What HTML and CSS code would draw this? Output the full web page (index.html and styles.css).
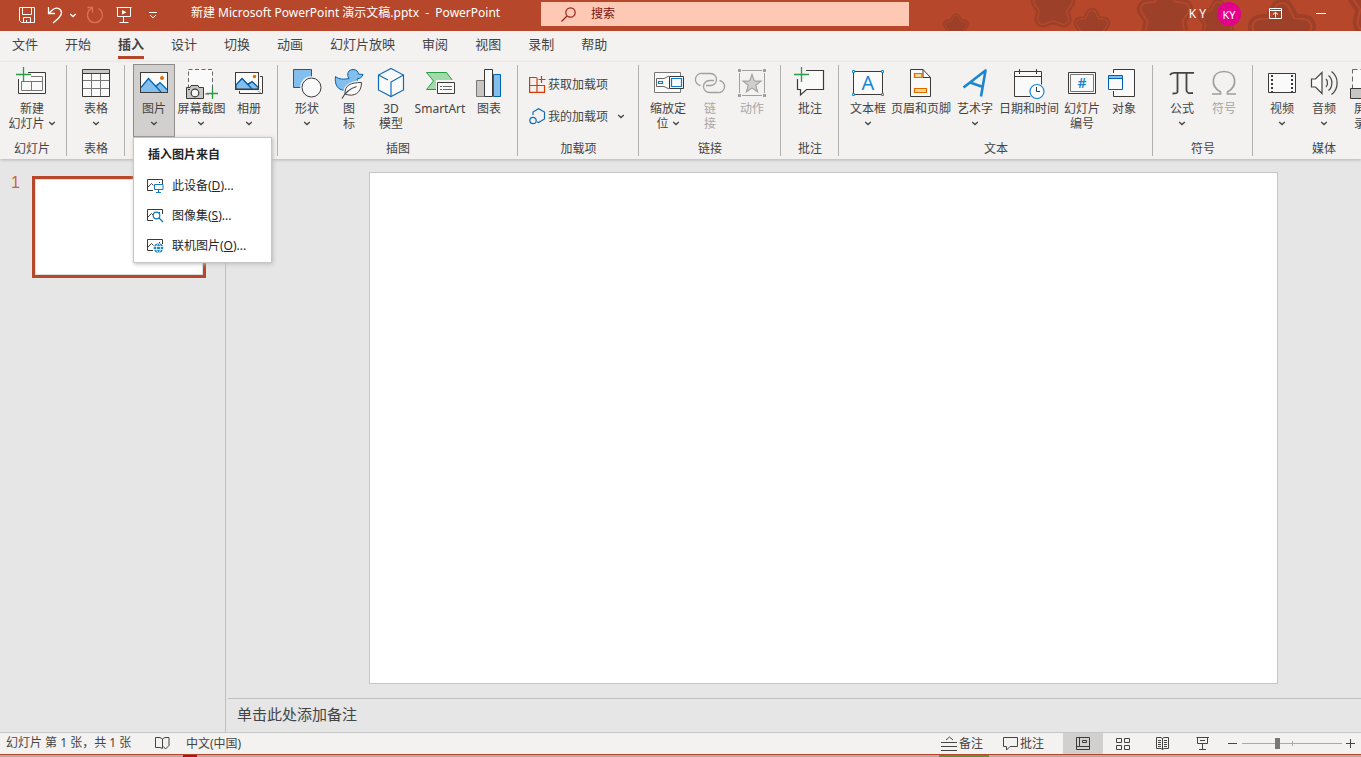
FILE: index.html
```html
<!DOCTYPE html>
<html lang="zh-CN">
<head>
<meta charset="utf-8">
<title>新建 Microsoft PowerPoint 演示文稿.pptx - PowerPoint</title>
<link rel="stylesheet" href="styles.css">
</head>
<body>
<svg class="defs" aria-hidden="true">
  <defs>
    <symbol id="chev" viewBox="0 0 8 5"><path d="M1.2 1 L4 3.6 L6.8 1" fill="none" stroke="currentColor" stroke-width="1.3"/></symbol>
    <path id="star" d="M0 -16 L5 -6 L15 -5 L9 4 L11 14 L0 10 L-11 14 L-9 4 L-15 -5 L-5 -6 Z" stroke-linejoin="round"/>
    <g id="starfull">
      <use href="#star" fill="#9c4029" stroke="#9c4029" stroke-width="17"/>
      <use href="#star" fill="#9c4029" stroke="#b7472a" stroke-width="12"/>
      <use href="#star" fill="#9c4029" stroke="#9c4029" stroke-width="9"/>
    </g>
    <g id="pic">
      <rect x="2.5" y="5.5" width="27" height="20" fill="#fafafa"/>
      <path d="M3 20 L10.500 11.500 L17 18 L22 15.500 L29 22.500 V25 H3 Z" fill="#83beec"/>
      <path d="M3 20.500 L10.500 11.500 L23 25 M18 19.500 L22 15.500 L29 22.500" fill="none" stroke="#0063b1" stroke-width="1.200"/>
      <circle cx="24" cy="11" r="2" fill="#e06c00"/>
      <rect x="2.5" y="5.5" width="27" height="20" fill="none" stroke="#3b3a38"/>
    </g>
    <g id="minipic">
      <path d="M15.500 7 V2.500 H.5 V13.500 H6" fill="none" stroke="#3b3a38"/>
      <path d="M1 10 L4.500 6.500 L6.500 8.500" fill="none" stroke="#3b3a38"/>
      <rect x="12" y="5" width="1" height="1" fill="#3b3a38"/>
    </g>
  </defs>
</svg>

<div class="app">
<header class="titlebar">
  <svg class="stars" width="441" height="31" viewBox="0 0 441 31" aria-hidden="true">
    <use href="#starfull" transform="translate(36 27) scale(.55)"/>
    <use href="#starfull" transform="translate(133 6) scale(.95)"/>
    <use href="#starfull" transform="translate(172 27) scale(.78)"/>
    <use href="#starfull" transform="translate(245 15) scale(1.2)"/>
    <use href="#starfull" transform="translate(298 20) scale(.85)"/>
    <use href="#starfull" transform="translate(362 34) scale(1.45)"/>
    <use href="#starfull" transform="translate(462 2) scale(1.5)"/>
  </svg>
  <div class="quick">
    <button class="q-save" aria-label="保存"><svg width="16" height="16" viewBox="0 0 16 16" fill="none" stroke="#fff"><path d="M.5 .5 H15.500 V15.500 H2.500 L.5 13.500 Z M3.500 .5 V7.500 H12.500 V.5 M4.500 15.500 V10.500 H11.500 V15.500 M7.500 13 V15"/></svg></button>
    <button class="q-undo" aria-label="撤消"><svg width="16" height="18" viewBox="0 0 16 18" fill="none" stroke="#fff" stroke-width="1.300"><path d="M1.500 1 V7.500 H8 M1.500 7.500 L6 3.500 C9 1 14 2 14.500 6.500 C14.700 10 11 13 6 17"/></svg></button>
    <button class="q-chev" aria-label="撤消选项"><svg width="8" height="5"><use href="#chev"/></svg></button>
    <button class="q-redo" aria-label="重复"><svg width="18" height="18" viewBox="0 0 18 18" fill="none" stroke="#e0704f" stroke-width="1.300"><path d="M1.500 1.500 H6.500 V6.500 M6 2.200 A7.500 7.500 0 1 0 12.500 2.500"/></svg></button>
    <button class="q-show" aria-label="从头开始"><svg width="16" height="16" viewBox="0 0 16 16" fill="none" stroke="#fff"><path d="M.5 .5 H15.500 M1.500 .5 V9.500 H14.500 V.5 M7.500 9.500 V15 M3.500 15.500 H12.500"/><path d="M6 3 L10.500 5.300 L6 7.500 Z" fill="#fff" stroke="none"/></svg></button>
    <button class="q-more" aria-label="自定义快速访问工具栏"><svg width="8" height="7" viewBox="0 0 8 7" fill="none" stroke="#fff"><path d="M0 .5 H8 M1 3 L4 5.800 L7 3"/></svg></button>
  </div>
  <div class="doc-title">新建 Microsoft PowerPoint 演示文稿.pptx&nbsp; -&nbsp; PowerPoint</div>
  <label class="search">
    <svg width="15" height="15" viewBox="0 0 15 15" fill="none" stroke="#96261c" stroke-width="1.200"><circle cx="9.500" cy="5.500" r="4.700"/><path d="M6 9 L.5 14.500"/></svg>
    <input type="text" placeholder="搜索" aria-label="搜索">
  </label>
  <div class="account">
    <span class="user">K Y</span>
    <button class="avatar" aria-label="帐户">KY</button>
    <button class="win" aria-label="功能区显示选项"><svg width="13" height="11" viewBox="0 0 13 11" fill="none" stroke="#fff"><path d="M.5 .5 H12.500 V10.500 H.5 Z M.5 2.500 H12.500 M6.500 9.500 V4.500 M4 6.500 L6.500 4.300 L9 6.500"/></svg></button>
    <button class="win" aria-label="最小化"><svg width="10" height="1"><rect width="10" height="1" fill="#fff"/></svg></button>
  </div>
</header>

<nav class="tabs">
  <button>文件</button><button>开始</button><button class="on">插入</button><button>设计</button><button>切换</button><button>动画</button><button>幻灯片放映</button><button>审阅</button><button>视图</button><button>录制</button><button>帮助</button>
</nav>

<div class="ribbon">
  <section class="group first">
    <div class="tools">
      <button class="tool w48"><svg class="ico" viewBox="0 0 32 32" fill="none" stroke="#444"><path d="M12 5.500 H29.500 V26.500 H2.500 V12" fill="#fafafa" stroke="#3b3a38"/><path d="M15 9.500 H26.500 V23.500 H5.500 V14.500 H26.500 M15.500 14.500 V23.500" stroke="#777"/><path d="M7.500 0 V15 M0 7.500 H15" stroke="#2b9a4b" stroke-width="1.300"/></svg>
      <span>新建<br>幻灯片 <svg class="chev"><use href="#chev"/></svg></span></button>
    </div>
    <h2>幻灯片</h2>
  </section>
  <section class="group">
    <div class="tools">
      <button class="tool"><svg class="ico" viewBox="0 0 32 32" fill="none" stroke="#3b3a38"><path d="M2.500 2.500 H29.500 V29.500 H2.500 Z" fill="#fafafa"/><path d="M3 3 H29 V6 H3 Z" fill="#c8c6c4" stroke="none"/><path d="M2.500 6.500 H29.500"/><path d="M3 13.500 H29 M3 21.500 H29 M11.500 7 V29 M20.500 7 V29" stroke="#777"/></svg>
      <span>表格<br><svg class="chev"><use href="#chev"/></svg></span></button>
    </div>
    <h2>表格</h2>
  </section>
  <section class="group">
    <div class="tools">
      <div class="drop">
        <button class="tool open" aria-expanded="true"><svg class="ico" viewBox="0 0 32 32"><use href="#pic"/></svg>
        <span>图片<br><svg class="chev"><use href="#chev"/></svg></span></button>
        <div class="menu">
          <h3>插入图片来自</h3>
          <button><svg width="17" height="16" viewBox="0 0 17 16"><use href="#minipic"/><path d="M7.500 7.500 H16 V12.500 H7.500 Z M11.500 12.500 V15 M9 15.500 H14" fill="#fff" stroke="#0f7ac5"/></svg><span>此设备(<u>D</u>)...</span></button>
          <button><svg width="17" height="16" viewBox="0 0 17 16"><use href="#minipic"/><circle cx="9.500" cy="8.500" r="3.300" fill="#fff" stroke="#0f7ac5" stroke-width="1.200"/><path d="M12 11 L16 15" stroke="#0f7ac5" stroke-width="1.300"/></svg><span>图像集(<u>S</u>)...</span></button>
          <button><svg width="17" height="16" viewBox="0 0 17 16"><use href="#minipic"/><circle cx="11.500" cy="11" r="4.800" fill="#1b86d0"/><path d="M7 9.500 H16 M7 12.500 H16" stroke="#fff" stroke-width=".8"/><ellipse cx="11.500" cy="11" rx="2" ry="4.500" fill="none" stroke="#fff" stroke-width=".8"/></svg><span>联机图片(<u>O</u>)...</span></button>
        </div>
      </div>
      <button class="tool w53"><svg class="ico" viewBox="0 0 32 32" fill="none" stroke="#3b3a38"><path d="M2.500 2.500 H26.500 V27 H2.500 Z" fill="#fafafa" stroke="#666" stroke-dasharray="4 2.500"/><path d="M.5 20.500 H4 L5 18.500 H12 L13 20.500 H17.500 V31.500 H.5 Z" fill="#c8c6c4"/><circle cx="9" cy="26" r="3.800" fill="#fafafa" stroke-width="1.200"/><path d="M2 22.500 H4"/><path d="M26.500 20 V32 M20.500 26.500 H32" stroke="#2b9a4b" stroke-width="1.300"/></svg>
      <span>屏幕截图<br><svg class="chev"><use href="#chev"/></svg></span></button>
      <button class="tool"><svg class="ico" viewBox="0 0 32 32" fill="none" stroke="#3b3a38"><path d="M6.500 9.500 H29.500 V26.500 H6.500 Z" fill="#fafafa"/><path d="M22 22 L28 26 M24 21 L28 23" stroke="#999"/><path d="M1 4 H27 V24 H1 Z" fill="#f3f2f1" stroke="none"/><path d="M2.500 5.500 H25.500 V22.500 H2.500 Z" fill="#fafafa"/><path d="M3 18 L9 11.500 L14.500 17 L19 14.500 L25 20 V22 H3 Z" fill="#83beec"/><path d="M3 18 L9 11.500 L19 22 M15 18 L19 14.500 L25 20" stroke="#0063b1" stroke-width="1.200"/><path d="M2.500 5.500 H25.500 V22.500 H2.500 Z"/><circle cx="21.500" cy="9.500" r="1.700" fill="#e06c00" stroke="none"/></svg>
      <span>相册<br><svg class="chev"><use href="#chev"/></svg></span></button>
    </div>
    <h2></h2>
  </section>
  <section class="group">
    <div class="tools">
      <button class="tool"><svg class="ico" viewBox="0 0 32 32" fill="none"><path d="M2.500 2.500 H20.500 V20.500 H2.500 Z" fill="#83beec" stroke="#0063b1"/><circle cx="20.500" cy="20.500" r="11.300" fill="#f3f2f1"/><circle cx="20.500" cy="20.500" r="9.500" fill="#fafafa" stroke="#3b3a38"/></svg>
      <span>形状<br><svg class="chev"><use href="#chev"/></svg></span></button>
      <button class="tool"><svg class="ico" viewBox="0 0 32 32" fill="none"><path d="M2.500 9.500 C6 12.500 11 12.500 16 11.500 C13 7 15.500 2.500 20 2.500 C23.500 2.500 25 4.500 25.500 7 L30 7.500 C29 10.500 27 11.500 24 12 C26 17 24 22 18 23.500 H12 C4 23 1.500 17 2.500 9.500 Z" fill="#83beec" stroke="#0063b1"/><path d="M30 13 C18 14 9 17 10 30 H17 C27 31 31 23 30 13 Z" fill="#f3f2f1"/><path d="M28.500 15.500 C18 15.500 11.500 18 12 27 C21 30.500 28.500 26 28.500 15.500 Z" fill="#fafafa" stroke="#444"/><path d="M9 31.500 C12 26 17 21.500 23.500 19.500" stroke="#444" stroke-width="1.200"/></svg>
      <span>图<br>标</span></button>
      <button class="tool"><svg class="ico" viewBox="0 0 32 32" fill="none" stroke="#0f6cbd" stroke-width="1.200"><path d="M16 1.500 L28.500 8 V23 L16 29.500 L3.500 23 V8 Z" fill="#fafafa"/><path d="M3.500 8 L13 13 M16 29.500 V15 L28.500 8"/></svg>
      <span>3D<br>模型</span></button>
      <button class="tool w56"><svg class="ico" viewBox="0 0 32 32" fill="none"><path d="M2.500 5.500 H22.500 L29 14 L23 22.500 H2.500 L9.500 14 Z" fill="#a0dba8" stroke="#2b9a4b"/><path d="M12 13 H32 V29 H12 Z" fill="#f3f2f1"/><path d="M13.500 15.500 H30.500 V26.500 H13.500 Z" fill="#fafafa" stroke="#3b3a38"/><path d="M16 19.500 H18 M19 19.500 H28 M16 22.500 H18 M19 22.500 H28" stroke="#666"/></svg>
      <span>SmartArt</span></button>
      <button class="tool"><svg class="ico" viewBox="0 0 32 32"><path d="M3.500 13.500 H11.500 V29.500 H3.500 Z" fill="#c8c6c4" stroke="#777"/><path d="M20.500 7.500 H27.500 V29.500 H20.500 Z" fill="#83beec" stroke="#0063b1"/><path d="M11.500 2.500 H19.500 V29.500 H11.500 Z" fill="#fafafa" stroke="#3b3a38"/></svg>
      <span>图表</span></button>
    </div>
    <h2>插图</h2>
  </section>
  <section class="group addins">
    <div class="rows">
      <button><svg width="17" height="17" viewBox="0 0 17 17" fill="none" stroke="#d83b01" stroke-width="1.200"><path d="M7.500 1.500 H.6 V16.400 H15.500 V9.500 H.6 M8 1.500 V16.400 M12.500 0 V7 M9.500 3.500 H16.500"/></svg>获取加载项</button>
      <button><svg width="17" height="17" viewBox="0 0 17 17" fill="none" stroke="#0f6cbd" stroke-width="1.200"><path d="M4 7 V4 L9.500 .8 L15.500 4 V11 L9.500 14.500 L8 13.800"/><circle cx="4" cy="12.500" r="3.200"/></svg>我的加载项<svg class="chev"><use href="#chev"/></svg></button>
    </div>
    <h2>加载项</h2>
  </section>
  <section class="group">
    <div class="tools">
      <button class="tool"><svg class="ico" viewBox="0 0 32 32" fill="none"><path d="M2.500 5.500 H28.500 V25.500 H2.500 Z" fill="#fafafa" stroke="#777"/><path d="M4.500 11.500 H12 L17 9 M4.500 19.500 H12 L17 22 M4.500 11.500 V19.500" stroke="#666"/><path d="M17.500 9.500 H31.500 V21.500 H17.500 Z" fill="#fafafa" stroke="#3b3a38"/><path d="M19.500 11.500 H29.500 V19.500 H19.500 Z M6.500 14.500 H10.500 V16.500 H6.500 Z" stroke="#0f7ac5" stroke-width="1.200"/></svg>
      <span>缩放定<br>位 <svg class="chev"><use href="#chev"/></svg></span></button>
      <button class="tool off" disabled><svg class="ico" viewBox="0 0 32 32" fill="none" stroke="#a19f9d" stroke-width="1.300"><path d="M6.500 18.500 A6 6 0 0 1 8.500 6.500 H16.500 A6 6 0 0 1 16.500 18.500 H12"/><path d="M25.500 13.500 A6 6 0 0 1 23.500 25.500 H15.500 A6 6 0 0 1 15.500 13.500 H20"/></svg>
      <span>链<br>接</span></button>
      <button class="tool off" disabled><svg class="ico" viewBox="0 0 32 32" fill="none" stroke="#a19f9d"><path d="M6 3.500 H26 M6 28.500 H26 M3.500 6 V26 M28.500 6 V26"/><path d="M2 2 H5 V5 H2 Z M27 2 H30 V5 H27 Z M2 27 H5 V30 H2 Z M27 27 H30 V30 H27 Z" fill="#a19f9d" stroke="none"/><path d="M16 7.500 L18.300 14 L25 14.100 L19.700 18.200 L21.600 24.800 L16 20.900 L10.400 24.800 L12.300 18.200 L7 14.100 L13.700 14 Z" fill="#d2d0ce" stroke-width="1.100"/></svg>
      <span>动作</span></button>
    </div>
    <h2>链接</h2>
  </section>
  <section class="group">
    <div class="tools">
      <button class="tool"><svg class="ico" viewBox="0 0 32 32" fill="none"><path d="M12 3.500 H29.500 V22.500 H12.500 L6.500 28 V22.500 H3.500 V12" fill="#fafafa" stroke="#3b3a38" stroke-width="1.200"/><path d="M0 0 H12 V12 H0 Z" fill="#f3f2f1"/><path d="M7.500 0 V15 M0 7.500 H15" stroke="#2b9a4b" stroke-width="1.300"/></svg>
      <span>批注</span></button>
    </div>
    <h2>批注</h2>
  </section>
  <section class="group">
    <div class="tools">
      <button class="tool"><svg class="ico" viewBox="0 0 32 32" fill="none"><path d="M1.500 4.500 H30.500 V27.500 H1.500 Z" fill="#fafafa" stroke="#3b3a38"/><path d="M.5 3.500 H2.500 V5.500 H.5 Z M29.500 3.500 H31.500 V5.500 H29.500 Z M.5 26.500 H2.500 V28.500 H.5 Z M29.500 26.500 H31.500 V28.500 H29.500 Z" fill="#fff" stroke="#1b86d0"/><text x="16" y="23" text-anchor="middle" font-size="20" fill="#1b86d0">A</text></svg>
      <span>文本框<br><svg class="chev"><use href="#chev"/></svg></span></button>
      <button class="tool w64"><svg class="ico" viewBox="0 0 32 32" fill="none"><path d="M5.500 2.500 H18 L25.500 10.500 V29.500 H5.500 Z" fill="#fafafa" stroke="#3b3a38"/><path d="M18 2.500 V10.500 H25.500" stroke="#3b3a38"/><path d="M9.500 6.500 H17 V10.500 H9.500 Z M9.500 21.500 H21.500 V25.500 H9.500 Z" fill="#fcd48c" stroke="#e06c00" stroke-width="1.200"/></svg>
      <span>页眉和页脚</span></button>
      <button class="tool w44"><svg class="ico" viewBox="0 0 32 32" fill="none" stroke="#1b86d0" stroke-width="2.600" stroke-linejoin="round"><path d="M4.500 20.500 L26.500 3.500 L22 29.500 M11 15.500 L24 20"/></svg>
      <span>艺术字<br><svg class="chev"><use href="#chev"/></svg></span></button>
      <button class="tool w64"><svg class="ico" viewBox="0 0 32 32" fill="none"><path d="M1.500 4.500 H28.500 V29.500 H1.500 Z" fill="#fafafa" stroke="#3b3a38"/><path d="M1.500 9.500 H28.500 M6.500 2 V7 M23.500 2 V7" stroke="#3b3a38"/><circle cx="24" cy="24.500" r="8.500" fill="#f3f2f1"/><circle cx="24" cy="24.500" r="7" fill="#fff" stroke="#1b86d0" stroke-width="1.200"/><path d="M23.500 20 V24.500 H27" stroke="#3b3a38"/></svg>
      <span>日期和时间</span></button>
      <button class="tool"><svg class="ico" viewBox="0 0 32 32" fill="none"><path d="M2.500 5.500 H29.500 V26.500 H2.500 Z" fill="#fafafa" stroke="#3b3a38"/><path d="M4.500 7.500 H27.500 V24.500 H4.500 Z" stroke="#777"/><text x="16" y="21" text-anchor="middle" font-size="14" font-weight="600" fill="#1b86d0">#</text></svg>
      <span>幻灯片<br>编号</span></button>
      <button class="tool"><svg class="ico" viewBox="0 0 32 32" fill="none"><path d="M5.500 6 V2.500 H26.500 V29.500 H5.500 V24" fill="#fafafa" stroke="#3b3a38"/><path d="M.5 8.500 H14.500 V22.500 H.5 Z" fill="#fafafa" stroke="#0063b1"/><path d="M1 9 H14 V11.500 H1 Z" fill="#83beec"/><path d="M1 11.500 H14" stroke="#0063b1"/></svg>
      <span>对象</span></button>
    </div>
    <h2>文本</h2>
  </section>
  <section class="group">
    <div class="tools">
      <button class="tool"><svg class="ico" viewBox="0 0 32 32" fill="none" stroke="#444" stroke-width="1.800"><path d="M4 8 C5 6 6 5.900 8 5.900 H28 M11.500 6 V25 C11.500 26.300 9 26.500 6.500 26.500 M20.500 6 V23 C20.500 26.500 23 26.500 27 26"/></svg>
      <span>公式<br><svg class="chev"><use href="#chev"/></svg></span></button>
      <button class="tool off" disabled><svg class="ico" viewBox="0 0 32 32" fill="none" stroke="#a19f9d" stroke-width="1.700"><path d="M4 27 H12.500 V25 C2 19 3 4.500 16 4.500 C29 4.500 30 19 19.500 25 V27 H28"/></svg>
      <span>符号</span></button>
    </div>
    <h2>符号</h2>
  </section>
  <section class="group">
    <div class="tools">
      <button class="tool"><svg class="ico" viewBox="0 0 32 32" fill="none" stroke="#3b3a38"><path d="M2.500 6.500 H29.500 V25.500 H2.500 Z" fill="#fafafa"/><path d="M6 8 V25 M26 8 V25" stroke-width="2" stroke-dasharray="2 2"/></svg>
      <span>视频<br><svg class="chev"><use href="#chev"/></svg></span></button>
      <button class="tool"><svg class="ico" viewBox="0 0 32 32" fill="none" stroke="#444" stroke-width="1.200"><path d="M3.500 12 H7.500 L14 5.500 V26.500 L7.500 20 H3.500 Z" fill="#fafafa"/><path d="M18 12 C20 14 20 18 18 20 M20.500 8.500 C25 12 25 20 20.500 23.500 M23.500 4.500 C31 10 31 22 23.500 27.500"/></svg>
      <span>音频<br><svg class="chev"><use href="#chev"/></svg></span></button>
      <button class="tool"><svg class="ico" viewBox="0 0 32 32" fill="none"><path d="M2.500 2.500 H29 V26 H2.500 Z" fill="#fafafa" stroke="#666" stroke-dasharray="5 3"/><path d="M.5 21.500 H20 V31.500 H.5 Z" fill="#c8c6c4" stroke="#3b3a38"/></svg>
      <span>屏幕<br>录制</span></button>
    </div>
    <h2>媒体</h2>
  </section>
</div>

<main class="work">
  <aside class="thumbs">
    <span class="num">1</span>
    <div class="thumb"></div>
  </aside>
  <div class="editor">
    <div class="canvas"><div class="slide"></div></div>
    <div class="notes">单击此处添加备注</div>
  </div>
</main>

<footer class="status">
  <span class="count">幻灯片 第 1 张，共 1 张</span>
  <button class="spell" aria-label="拼写检查"><svg width="15" height="13" viewBox="0 0 15 13" fill="none" stroke="#444"><path d="M7.500 11.500 L5 10.500 H.5 V.5 H5 L7.500 2 L10 .5 H14 V8 M7.500 2 V11.500 M8.500 9.500 L10.500 12 L14.500 8"/></svg></button>
  <button class="lang">中文(中国)</button>
  <button class="s-notes"><svg width="17" height="16" viewBox="0 0 17 16" fill="none" stroke="#444"><path d="M5 4 L8.500 1 L12 4 M0 6.500 H16 M0 10.500 H16 M0 14.500 H16"/></svg>备注</button>
  <button class="s-comm"><svg width="15" height="14" viewBox="0 0 15 14" fill="none" stroke="#444"><path d="M.5 .5 H14.500 V9.500 H7 L3.500 13 V9.500 H.5 Z"/></svg>批注</button>
  <button class="view on" aria-label="普通视图"><svg width="14" height="13" viewBox="0 0 14 13" fill="none" stroke="#3b3a38"><path d="M.5 .5 H13.500 V12.500 H.5 Z M3.500 .5 V9.500 H13.500 M.5 9.500 H3.500 M6.500 3.500 H10.500 V5.500 H6.500 Z"/></svg></button>
  <button class="view" aria-label="幻灯片浏览"><svg width="14" height="12" viewBox="0 0 14 12" fill="none" stroke="#444"><path d="M.5 .5 H5.500 V4.500 H.5 Z M8.500 .5 H13.500 V4.500 H8.500 Z M.5 7.500 H5.500 V11.500 H.5 Z M8.500 7.500 H13.500 V11.500 H8.500 Z"/></svg></button>
  <button class="view" aria-label="阅读视图"><svg width="14" height="13" viewBox="0 0 14 13" fill="none" stroke="#444"><path d="M.5 .5 H5 L6.500 1.500 L8 .5 H12.500 V11.500 H8 L6.500 12.500 L5 11.500 H.5 Z M6.500 1.500 V12.500 M2 3.500 H5 M2 5.500 H5 M2 7.500 H5 M2 9.500 H5 M8 3.500 H11 M8 5.500 H11 M8 7.500 H11 M8 9.500 H11"/></svg></button>
  <button class="view" aria-label="幻灯片放映"><svg width="14" height="13" viewBox="0 0 14 13" fill="none" stroke="#444"><path d="M.5 .5 H13 M1.500 .5 V6.500 H11.500 V.5 M4 3.500 H9 M6.500 6.500 V12 M3 12.500 H10"/></svg></button>
  <button class="zoom" aria-label="缩小"><svg width="9" height="9"><path d="M0 4.500 H9" stroke="#444"/></svg></button>
  <input class="slider" type="range" min="0" max="100" value="35" aria-label="缩放">
  <button class="zoom" aria-label="放大"><svg width="9" height="9"><path d="M0 4.500 H9 M4.500 0 V9" stroke="#444"/></svg></button>
</footer>
<div class="edge"><i class="red"></i><i class="green"></i></div>
</div>
</body>
</html>
```

FILE: styles.css
```css
* { box-sizing: border-box; }
body {
  margin: 0;
  font-family: "Noto Sans", "Noto Sans CJK SC", sans-serif;
  font-size: 12px;
  color: #444;
  background: #e6e6e6;
}
button {
  font: inherit;
  color: inherit;
  background: none;
  border: 0;
  padding: 0;
  margin: 0;
}
svg { display: block; flex: none; }
h2, h3 { margin: 0; font-size: 12px; }
.defs { position: absolute; width: 0; height: 0; }
.app { display: flex; flex-direction: column; height: 100vh; overflow: hidden; }

/* title bar */
.titlebar {
  position: relative;
  display: flex;
  align-items: flex-start;
  height: 31px;
  background: #b7472a;
  color: #fff;
  overflow: hidden;
  flex: none;
}
.stars { position: absolute; right: 0; top: 0; }
.quick { display: flex; height: 30px; padding-left: 13px; }
.quick button { display: flex; align-items: center; justify-content: center; }
.q-save { width: 28px; }
.q-undo { width: 28px; }
.q-chev { width: 8px; }
.q-redo { width: 35px; }
.q-show { width: 24px; }
.q-more { width: 33px; }
.doc-title {
  width: 372px;
  padding-left: 22px;
  line-height: 26px;
  white-space: nowrap;
}
.search {
  display: flex;
  align-items: center;
  flex: 0 1 368px;
  height: 24px;
  margin-top: 2px;
  padding-left: 20px;
  gap: 15px;
  background: #fdc9b5;
}
.search input {
  flex: 1;
  min-width: 0;
  height: 20px;
  margin-bottom: 2px;
  border: 0;
  padding: 0;
  background: none;
  font: inherit;
  color: #7a1210;
}
.search input::placeholder { color: #7a1210; opacity: 1; }
.account {
  position: relative;
  display: flex;
  align-items: center;
  height: 26px;
  margin-left: auto;
  padding-right: 17px;
}
.user { margin-right: 11px; }
.avatar {
  width: 24px;
  height: 24px;
  margin: 2px 11px 0 0;
  border-radius: 50%;
  background: #e3008c;
  font-size: 11px;
}
.win { display: flex; justify-content: center; width: 46px; }

/* tabs */
.tabs {
  display: flex;
  gap: 27px;
  height: 31px;
  padding-left: 12px;
  background: #f3f2f1;
  font-size: 13px;
  flex: none;
}
.tabs button {
  height: 28px;
  border-bottom: 3px solid transparent;
  white-space: nowrap;
}
.tabs .on { border-color: #b7472a; font-weight: 700; }

/* ribbon */
.ribbon {
  position: relative;
  z-index: 2;
  display: flex;
  height: 97px;
  background: #f3f2f1;
  box-shadow: 0 1px 3px #b5b5b5;
  flex: none;
}
.group {
  position: relative;
  flex: none;
  display: flex;
  flex-direction: column;
  padding: 2px 8px 0;
}
.group::after {
  content: "";
  position: absolute;
  right: 0;
  top: 3px;
  width: 1px;
  height: 91px;
  background: #b3b0ad;
}
.group.first { padding-right: 11px; }
.group h2 {
  height: 18px;
  margin-top: 3px;
  line-height: 18px;
  text-align: center;
  font-weight: 400;
}
.tools { display: flex; height: 73px; }
.tool {
  display: flex;
  flex-direction: column;
  align-items: center;
  width: 42px;
  height: 73px;
  padding-top: 3px;
  line-height: 15px;
  white-space: nowrap;
}
.tool span { margin-top: 2px; }
.w44 { width: 44px; }
.w48 { width: 48px; }
.w53 { width: 53px; }
.w56 { width: 56px; }
.w64 { width: 64px; }
.tool.off { color: #a8a6a4; }
.tool.open { background: #d2d0ce; box-shadow: inset 0 0 0 1px #8f8d8b; }
.ico { width: 32px; height: 32px; }
.chev { display: inline-block; width: 8px; height: 5px; vertical-align: 2px; }
.rows { display: flex; flex-direction: column; height: 73px; padding: 4px 6px 5px 3px; }
.rows button { display: flex; align-items: center; height: 32px; gap: 2px; white-space: nowrap; }
.rows .chev { margin-left: 7px; }

/* picture menu */
.drop { position: relative; }
.menu {
  position: absolute;
  left: 0;
  top: 73px;
  width: 139px;
  padding: 1px 0 2px;
  background: #fff;
  border: 1px solid #c6c6c6;
  box-shadow: 1px 1px 4px #bbb;
  color: #262626;
}
.menu h3 { padding-left: 14px; line-height: 31px; }
.menu button {
  display: flex;
  align-items: center;
  gap: 8px;
  width: 100%;
  height: 30px;
  padding-left: 13px;
}

/* work area */
.work { display: flex; flex: 1; min-height: 0; }
.thumbs {
  display: flex;
  gap: 13px;
  width: 226px;
  padding: 17px 19px 0 11px;
  border-right: 1px solid #bfbfbf;
}
.num {
  width: 8px;
  color: #d0603f;
  font-family: "Liberation Sans", sans-serif;
  font-size: 16px;
  line-height: 14px;
}
.thumb {
  flex: 1;
  height: 102px;
  background: #fff;
  border: 3px solid #b7472a;
  box-shadow: inset 0 0 0 1px #ddd;
}
.editor { display: flex; flex-direction: column; flex: 1; }
.canvas { display: flex; flex: 1; padding: 13px 83px 14px 143px; }
.slide { flex: 1; background: #fff; border: 1px solid #c6c6c6; }
.notes {
  height: 34px;
  margin-left: 2px;
  padding-left: 9px;
  border-top: 1px solid #bfbfbf;
  font-size: 15px;
  line-height: 31px;
}

/* status bar */
.status {
  display: flex;
  align-items: stretch;
  height: 22px;
  padding: 0 6px;
  background: #f3f2f1;
  border-top: 1px solid #c6c6c6;
  line-height: 20px;
  flex: none;
}
.status button { display: flex; align-items: center; white-space: nowrap; }
.count { min-width: 130px; }
.spell { margin-left: 19px; }
.lang { margin-left: 16px; }
.s-notes { gap: 1px; margin-left: auto; margin-right: 20px; }
.s-comm { gap: 2px; margin-right: 19px; }
.status .view { justify-content: center; width: 40px; }
.view.on { background: #d2d0ce; }
.status .zoom { justify-content: center; width: 19px; }
.status .zoom:last-child { width: 9px; margin-left: 4px; }
.slider {
  appearance: none;
  width: 100px;
  height: 20px;
  margin: 0;
  background:
    linear-gradient(#aaa, #aaa) 50px 8px / 1px 5px no-repeat,
    linear-gradient(#aaa, #aaa) 0 10px / 100% 1px no-repeat;
}
.slider::-webkit-slider-thumb {
  appearance: none;
  width: 5px;
  height: 11px;
  background: #777;
}
.edge {
  position: relative;
  height: 3px;
  border-top: 1px solid #b7472a;
  background: #b0aeae;
  flex: none;
}
.edge i { position: absolute; top: 0; height: 2px; }
.edge .red { left: 183px; width: 14px; background: #b01020; }
.edge .green { left: 939px; width: 50px; background: #4c9a3c; }
```
